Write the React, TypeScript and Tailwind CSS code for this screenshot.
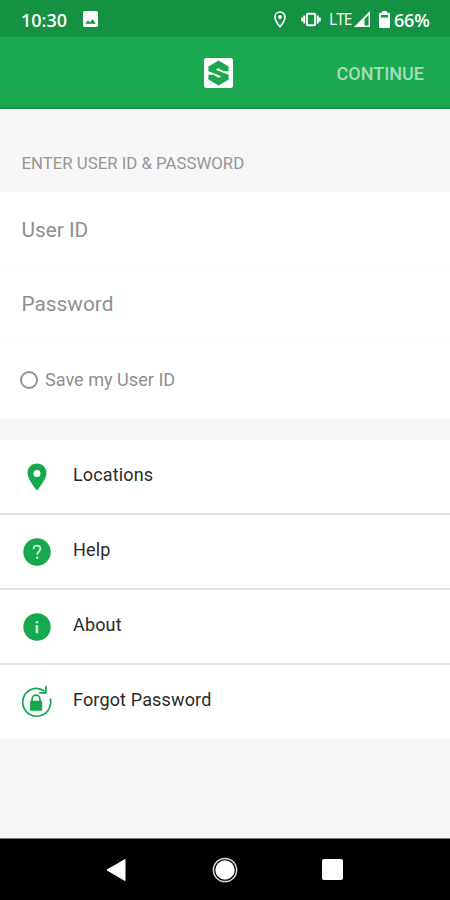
import type { ReactNode } from 'react';

interface MenuRowProps {
  icon: ReactNode;
  label: string;
  last?: boolean;
}

function PinIcon() {
  return (
    <svg width="20" height="28" viewBox="0 0 20 28" className="ml-[6px]">
      <path
        fill="#16a84c"
        fillRule="evenodd"
        d="M10 0.5C4.6 0.5 0.5 4.7 0.5 10C0.5 16.5 10 27.5 10 27.5S19.5 16.5 19.5 10C19.5 4.7 15.4 0.5 10 0.5ZM10 7A3.5 3.5 0 1 1 10 14A3.5 3.5 0 1 1 10 7Z"
      />
    </svg>
  );
}

function HelpIcon() {
  return (
    <svg width="28" height="28" viewBox="0 0 28 28" className="ml-[2px]">
      <circle cx="14" cy="14" r="13.7" fill="#16a84c" />
      <path
        d="M10.6 10.9C10.6 8.8 12 7.6 14 7.6S17.4 8.8 17.4 10.7C17.4 13.3 14.2 13.5 14.2 16.8"
        fill="none"
        stroke="#d3f0dd"
        strokeWidth="1.8"
      />
      <circle cx="14.2" cy="19.8" r="1.2" fill="#d3f0dd" />
    </svg>
  );
}

function InfoIcon() {
  return (
    <svg width="28" height="28" viewBox="0 0 28 28" className="ml-[2px]">
      <circle cx="14" cy="14" r="13.7" fill="#16a84c" />
      <path d="M12.6 8.2h2.6v2h-2.6zM12.6 12h2.6v8.2h-2.6z" fill="#c8ecd4" />
    </svg>
  );
}

function ForgotIcon() {
  return (
    <svg width="31" height="33" viewBox="0 0 31 33">
      <path
        d="M29.2 13.5A14 14 0 1 1 10.5 4.2C15 2.6 19.5 3.2 23.5 6.2"
        fill="none"
        stroke="#16a84c"
        strokeWidth="1.7"
      />
      <path d="M24.9 1V7.8H18.2" fill="none" stroke="#16a84c" strokeWidth="1.7" />
      <path d="M11 17V14.3A4 4.2 0 0 1 19 14.3V17" fill="none" stroke="#16a84c" strokeWidth="1.7" />
      <rect x="9" y="15.8" width="12.2" height="10" rx="1.2" fill="#16a84c" />
    </svg>
  );
}

function StatusBar() {
  return (
    <div className="flex h-[37px] items-center bg-[#159142] pl-[21px] pt-px text-white">
      <span className="w-[62px] pt-px font-['Open_Sans',sans-serif] text-[18px] font-semibold leading-none">
        10:30
      </span>
      <svg width="15" height="16" viewBox="0 0 15 16">
        <rect width="15" height="16" rx="1.8" fill="#fff" />
        <path d="M2.4 12.8L5 9.2L7 11.4L9.6 8.2L12.8 12.8Z" fill="#159142" />
      </svg>
      <svg width="12" height="17" viewBox="0 0 12 17" className="ml-[176px]">
        <path
          d="M6 1C3.1 1 1 3.2 1 6C1 9.8 6 15.8 6 15.8S11 9.8 11 6C11 3.2 8.9 1 6 1Z"
          fill="none"
          stroke="#fff"
          strokeWidth="1.6"
        />
        <circle cx="6" cy="6" r="1.9" fill="#fff" />
      </svg>
      <svg width="20" height="15" viewBox="0 0 20 15" className="ml-[15px]">
        <rect x="5.9" y="1.8" width="8.2" height="11.4" rx="1" fill="none" stroke="#fff" strokeWidth="2" />
        <path d="M3.2 3.4V11.6M16.8 3.4V11.6M1.2 5.5V9.5M18.8 5.5V9.5" stroke="#fff" strokeWidth="1.9" />
      </svg>
      <span className="ml-[8px] w-[25px] whitespace-nowrap pt-[2px] font-['Open_Sans',sans-serif] text-[15.5px] font-medium leading-none tracking-[-0.9px]">
        LTE
      </span>
      <svg width="16" height="16" viewBox="0 0 16 16">
        <path fillRule="evenodd" d="M16 0V16H0ZM14.6 4V14.5H10.5V8Z" fill="#fff" />
      </svg>
      <svg width="11" height="17" viewBox="0 0 11 17" className="ml-[9px]">
        <path
          fillRule="evenodd"
          d="M3.2 0H7.8V1.7H9.8Q11 1.7 11 2.9V15.8Q11 17 9.8 17H1.2Q0 17 0 15.8V2.9Q0 1.7 1.2 1.7H3.2ZM2 4V6.4H9V4Z"
          fill="#fff"
        />
      </svg>
      <span className="ml-[4px] pt-px font-['Open_Sans',sans-serif] text-[18px] font-semibold leading-none tracking-[-0.2px]">
        66%
      </span>
    </div>
  );
}

function Header() {
  return (
    <div className="flex h-[72px] items-center border-b-2 border-[#149a45] bg-[#1aa94f] pl-[204px] pr-[26px] pt-[2px] text-[#a5ddb9]">
      <svg width="29" height="30" viewBox="0 0 29 30">
        <rect width="29" height="30" rx="2.5" fill="#fff" />
        <path
          d="M14.5 2.6L24.6 8.4V13.2H19.6L14.5 10.2L11.8 11.8L24.6 16.8V21.6L14.5 27.4L4.4 21.6V16.8H9.4L14.5 19.8L17.2 18.2L4.4 13.2V8.4Z"
          fill="#1aa94f"
        />
      </svg>
      <span className="ml-auto text-[18px] font-medium">CONTINUE</span>
    </div>
  );
}

function MenuRow({ icon, label, last }: MenuRowProps) {
  return (
    <div className={`flex items-center bg-white pl-[21px] ${last ? 'h-[73px] pt-px pb-[2px]' : 'h-[75px] border-b-2 border-[#e2e2e2]'}`}>
      <div className="w-[52px]">{icon}</div>
      <span className="pb-[4px] text-[18px] tracking-[0.15px] text-[#2a2a2a]">{label}</span>
    </div>
  );
}

export default function App() {
  return (
    <div className="flex h-[900px] w-[450px] flex-col overflow-hidden bg-[#f7f7f7] font-[Roboto,sans-serif]">
      <StatusBar />
      <Header />

      <div className="flex h-[83px] items-end px-[21.5px] pb-[17px] text-[16.8px] leading-[24px] text-[#969696]">
        ENTER USER ID &amp; PASSWORD
      </div>
      <div className="h-[226px] bg-white text-[#8f8f8f]">
        <div className="flex h-[75px] items-center border-b border-[#fcfcfc] px-[21.5px] pt-[3px] text-[20.8px]">User ID</div>
        <div className="flex h-[75px] items-center border-b border-[#fcfcfc] px-[21.5px] pt-px text-[20.8px]">Password</div>
        <div className="flex h-[76px] items-center gap-[7px] px-[20px] text-[18.1px]">
          <span className="size-[18px] rounded-full border-2 border-[#929292]" />
          Save my User ID
        </div>
      </div>

      <div className="mt-[22px]">
        <MenuRow icon={<PinIcon />} label="Locations" />
        <MenuRow icon={<HelpIcon />} label="Help" />
        <MenuRow icon={<InfoIcon />} label="About" />
        <MenuRow icon={<ForgotIcon />} label="Forgot Password" last />
      </div>

      <div className="mt-auto flex h-[62px] items-center border-t border-[#777] bg-black pl-[106px]">
        <svg width="20" height="24" viewBox="0 0 20 24">
          <path d="M1 12L19 1.5V22.5Z" fill="#fff" stroke="#fff" strokeLinejoin="round" />
        </svg>
        <svg width="26" height="26" viewBox="0 0 26 26" className="ml-[86px]">
          <circle cx="13" cy="13" r="11.6" fill="none" stroke="#ddd" strokeWidth="1.5" />
          <circle cx="13" cy="13" r="9.7" fill="#fff" />
        </svg>
        <div className="ml-[84px] size-[21px] rounded-[2px] bg-white" />
      </div>
    </div>
  );
}
